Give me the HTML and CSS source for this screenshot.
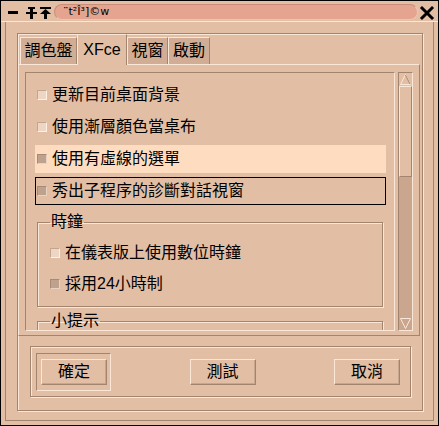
FILE: index.html
```html
<!DOCTYPE html>
<html>
<head>
<meta charset="utf-8">
<link rel="stylesheet" href="styles.css">
</head>
<body>
<div class="window">
  <div class="titlebar">
    <svg class="tb-icons" width="53" height="20" viewBox="0 0 53 20">
      <rect x="7" y="10" width="10" height="3" fill="#000"/>
      <rect x="27" y="6" width="7" height="2" fill="#000"/>
      <rect x="29" y="6" width="3" height="12" fill="#000"/>
      <rect x="25" y="11" width="11" height="2" fill="#000"/>
      <rect x="39" y="6" width="11" height="2" fill="#000"/>
      <polygon points="44.5,8 39,13 50,13" fill="#000"/>
      <rect x="43" y="12" width="3" height="6" fill="#000"/>
    </svg>
    <div class="pill"><span class="title">¨t²Î³]©w</span></div>
    <svg class="close" width="17" height="20" viewBox="0 0 17 20">
      <path d="M3 7 L13 17 M13 7 L3 17" stroke="#000" stroke-width="3" stroke-linecap="square"/>
    </svg>
  </div>
  <div class="wbody">
    <div class="bigframe">
      <div class="tabs">
        <div class="tab t1">調色盤</div>
        <div class="tab t2 active">XFce</div>
        <div class="tab t3">視窗</div>
        <div class="tab t4">啟動</div>
      </div>
      <div class="panel">
        <div class="viewport">
          <div class="vcontent">
            <div class="row"><span class="cb"></span>更新目前桌面背景</div>
            <div class="row"><span class="cb"></span>使用漸層顏色當桌布</div>
            <div class="row hl"><span class="cb on"></span>使用有虛線的選單</div>
            <div class="row focus"><span class="cb on"></span>秀出子程序的診斷對話視窗</div>
            <fieldset class="group">
              <legend>時鐘</legend>
              <div class="row"><span class="cb"></span>在儀表版上使用數位時鐘</div>
              <div class="row"><span class="cb on"></span>採用24小時制</div>
            </fieldset>
            <fieldset class="group g2">
              <legend>小提示</legend>
              <div class="row"><span class="cb"></span>顯示小提示</div>
            </fieldset>
          </div>
        </div>
        <div class="scrollbar">
          <div class="sb-btn up">
            <svg width="13" height="13" viewBox="0 0 13 13"><polygon points="6.5,1.5 1.5,11.5 11.5,11.5" fill="none" stroke="#fbe7d7" stroke-width="1"/><line x1="6.5" y1="2" x2="11" y2="11" stroke="#a3846f"/></svg>
          </div>
          <div class="sb-slider"></div>
          <div class="sb-trough"></div>
          <div class="sb-btn down">
            <svg width="13" height="13" viewBox="0 0 13 13"><polygon points="1.5,1.5 11.5,1.5 6.5,11.5" fill="none" stroke="#fbe7d7" stroke-width="1"/></svg>
          </div>
        </div>
      </div>
      <div class="actions">
        <div class="defframe"><button class="btn">確定</button></div>
        <button class="btn mid">測試</button>
        <button class="btn">取消</button>
      </div>
    </div>
  </div>
</div>
</body>
</html>
```
FILE: styles.css
```css
html, body {
  margin: 0;
  padding: 0;
  background: #e2bea5;
}
* { box-sizing: border-box; }

.window {
  width: 439px;
  height: 426px;
  border: 1px solid #000;
  background: #e2bea5;
  display: flex;
  flex-direction: column;
  font-family: "Liberation Sans", "Noto Sans CJK TC", sans-serif;
  color: #000;
}

.titlebar {
  height: 21px;
  flex: none;
  display: flex;
  align-items: flex-start;
  border-bottom: 1px solid #fbe7d7;
}
.tb-icons { flex: none; display: block; }
.pill {
  flex: none;
  width: 364px;
  height: 16px;
  margin-top: 3px;
  background: #e4a48f;
  border-radius: 8px;
  border-top: 1px solid #c98f7b;
  border-left: 1px solid #c98f7b;
  border-bottom: 1px solid #f2c3b0;
  border-right: 1px solid #f2c3b0;
  padding-left: 8px;
  font-size: 11px;
  line-height: 14px;
  font-family: "DejaVu Sans", sans-serif;
  white-space: nowrap;
  overflow: hidden;
}
.close { flex: none; display: block; margin-left: 1px; }

.wbody {
  flex: 1;
  margin: 0 4px 4px 4px;
  border-left: 1px solid #a3846f;
  border-right: 1px solid #a3846f;
  border-bottom: 1px solid #a3846f;
  padding: 11px 10px 9px 11px;
  display: flex;
}

.bigframe {
  flex: 1;
  border: 1px solid #a3846f;
  box-shadow: inset 1px 1px 0 #fbe7d7, 1px 1px 0 #fbe7d7;
  display: flex;
  flex-direction: column;
}

.tabs {
  height: 30px;
  flex: none;
  display: flex;
  align-items: flex-end;
  padding-left: 2px;
  position: relative;
  z-index: 2;
}
.tab {
  height: 27px;
  background: #d2ad95;
  border-top: 1px solid #fbe7d7;
  border-left: 1px solid #fbe7d7;
  border-right: 1px solid #a3846f;
  font-size: 16px;
  line-height: 25px;
  text-align: center;
}
.tab.active {
  height: 31px;
  margin-bottom: -1px;
  background: #e2bea5;
  line-height: 29px;
}
.t1 { width: 57px; }
.t2 { width: 50px; }
.t3 { width: 41px; }
.t4 { width: 42px; }

.panel {
  width: 402px;
  height: 272px;
  flex: none;
  border: 1px solid;
  border-color: #fbe7d7 #a3846f #a3846f #fbe7d7;
  padding: 7px 6px 4px 6px;
  display: flex;
  gap: 3px;
}

.viewport {
  width: 370px;
  height: 259px;
  border: 1px solid;
  border-color: #a3846f #fbe7d7 #fbe7d7 #a3846f;
  overflow: hidden;
}
.vcontent {
  padding: 8px 8px 0 9px;
}

.row {
  height: 28px;
  margin-bottom: 4px;
  display: flex;
  align-items: center;
  padding-left: 2px;
  font-size: 16px;
  line-height: 20px;
  white-space: nowrap;
  border: 1px solid transparent;
}
.row.hl { background: #fedcc0; border-color: #fedcc0; }
.row.focus { border-color: #000; }

.cb {
  width: 10px;
  height: 10px;
  flex: none;
  margin-left: -1px;
  margin-right: 5px;
  background: #eed6c4;
  border: 1px solid;
  border-color: #c4a590 #fff0e4 #fff0e4 #c4a590;
}
.cb.on {
  background: #bfa28e;
  border-color: #a88a76 #ead2c0 #ead2c0 #a88a76;
}

.group {
  margin: 8px 3px 0 2px;
  padding: 8px 0 8px 10px;
  border: 1px solid #a3846f;
  box-shadow: inset 1px 1px 0 #fbe7d7, 1px 1px 0 #fbe7d7;
  min-width: 0;
}
.group legend {
  font-size: 16px;
  line-height: 18px;
  padding: 0 1px;
  margin-left: 2px;
}
.group .row { margin-bottom: 3px; }
.group .row:last-child { margin-bottom: 0; }
.group.g2 { margin-top: 5px; }

.scrollbar {
  width: 15px;
  height: 259px;
  border: 1px solid;
  border-color: #a3846f #fbe7d7 #fbe7d7 #a3846f;
  background: #c9a68d;
  display: flex;
  flex-direction: column;
}
.sb-btn {
  height: 13px;
  flex: none;
}
.sb-btn svg { display: block; }
.sb-btn.up { background: #e2bea5; }
.sb-slider {
  height: 91px;
  flex: none;
  background: #e2bea5;
  border: 1px solid;
  border-color: #fbe7d7 #a3846f #a3846f #fbe7d7;
}
.sb-trough { flex: 1; }

.actions {
  height: 51px;
  flex: none;
  margin: 10px 11px 0 12px;
  border: 1px solid #a3846f;
  box-shadow: inset 1px 1px 0 #fbe7d7, 1px 1px 0 #fbe7d7;
  padding: 6px 10px 0 5px;
  display: flex;
  align-items: flex-start;
  justify-content: space-between;
}
.defframe {
  border: 1px solid;
  border-color: #a3846f #fbe7d7 #fbe7d7 #a3846f;
  padding: 5px 3px 5px 4px;
}
.btn {
  width: 66px;
  height: 26px;
  margin: 0;
  padding: 0;
  background: #e2bea5;
  border: 1px solid;
  border-color: #fbe7d7 #a3846f #a3846f #fbe7d7;
  box-shadow: inset -1px -1px 0 #c7a68f;
  font-family: "Liberation Sans", "Noto Sans CJK TC", sans-serif;
  font-size: 16px;
  line-height: 20px;
  color: #000;
  display: block;
  overflow: visible;
}
.actions > .btn { margin-top: 6px; }
```
